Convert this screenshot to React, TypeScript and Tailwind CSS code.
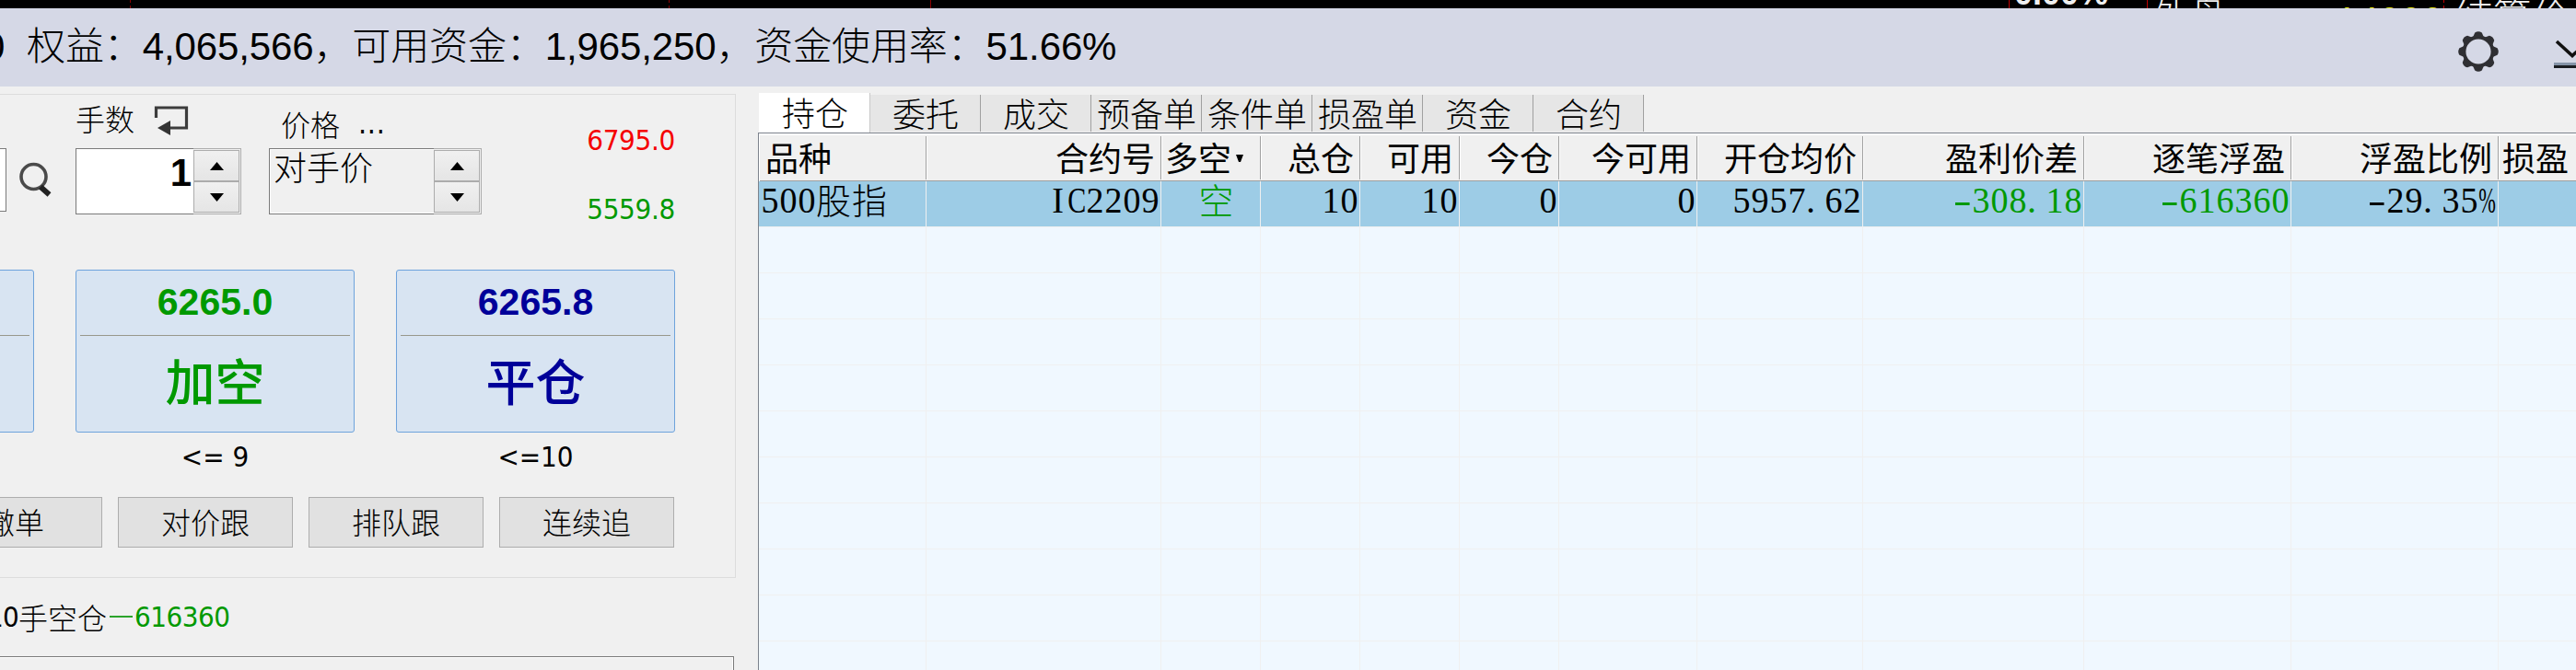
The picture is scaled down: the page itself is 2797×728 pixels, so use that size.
import React from "react";

const SONG = "font-['Liberation_Sans','Noto_Sans_CJK_SC',sans-serif] font-light";
const CJK = "font-['Noto_Sans_CJK_SC',sans-serif]";
const TAHOMA = "font-['DejaVu_Sans_Condensed','DejaVu_Sans','Noto_Sans_CJK_SC',sans-serif] [font-stretch:75%]";

function TickerStrip() {
  return (
    <div className="flex h-[9px] shrink-0 overflow-hidden bg-black">
      <div className="ml-[141px] h-[9px] w-0 border-l border-dashed border-[#8b0000]" />
      <div className="ml-[584px] h-[9px] w-0 border-l border-dashed border-[#8b0000]" />
      <div className="ml-[283px] h-[9px] w-px bg-[#8b0000]" />
      <div className="ml-[1170px] h-[9px] w-px bg-[#c00000]" />
      <div className="ml-[5px] -mt-[31px] w-[144px] shrink-0 whitespace-nowrap font-['Liberation_Sans',sans-serif] text-[36px] leading-[48px] font-bold text-[#f0f0f0]">
        0.00%
      </div>
      <div className="h-[9px] w-px bg-[#c00000]" />
      <div className={`${CJK} ml-[5px] -mt-[8px] w-[199px] shrink-0 whitespace-nowrap text-[40px] leading-[44px] font-light text-[#f0f0f0]`}>
        外盘
      </div>
      <div className="-mt-[3px] w-[117px] shrink-0 whitespace-nowrap font-['Liberation_Sans',sans-serif] text-[42px] leading-[52px] text-[#e8e800]">
        14000
      </div>
      <div className="h-[9px] w-0 border-l border-dashed border-[#c00000]" />
      <div className={`${CJK} ml-[11px] -mt-[7px] shrink-0 whitespace-nowrap text-[42px] leading-[44px] font-light text-[#f0f0f0]`}>
        结算价
      </div>
    </div>
  );
}

function GearIcon() {
  const teeth = [0, 45, 90, 135, 180, 225, 270, 315];
  return (
    <svg className="h-[44px] w-[44px] shrink-0" viewBox="-22 -22 44 44">
      <circle r="15.5" fill="none" stroke="#2f2f33" strokeWidth="3.8" />
      {teeth.map((a) => (
        <path key={a} d="M-6 -15.5 L-3.800 -20.6 Q0 -23 3.800 -20.6 L6 -15.5 Z" fill="#2f2f33" transform={`rotate(${a})`} />
      ))}
    </svg>
  );
}

function AccountBar() {
  return (
    <div className="flex h-[85px] shrink-0 items-start overflow-hidden bg-[#d5d8e6]">
      <div className={`${SONG} -ml-[18px] flex pt-[18px] text-[42px] leading-[48px] tracking-[-0.12px] whitespace-pre text-black`}>
        <span className="w-[47px]">0</span>
        <span>权益：4,065,566，可用资金：1,965,250，资金使用率：51.66%</span>
      </div>
      <div className="ml-auto flex w-[128px] shrink-0 items-start pt-[25px]">
        <GearIcon />
        <svg className="mt-[7px] ml-[59px] h-[44px] w-[25px] shrink-0" viewBox="0 0 25 44">
          <path d="M4 4 L21 19.5 L38 4" fill="none" stroke="#111" strokeWidth="3.6" />
          <rect x="1" y="27" width="30" height="3" fill="#8594a8" />
          <rect x="1" y="30" width="30" height="3" fill="#1a1d22" />
        </svg>
      </div>
    </div>
  );
}

function Spinner() {
  return (
    <div className="flex w-[52px] shrink-0 flex-col border border-l-0 border-[#adadad] bg-[#f0f0f0] p-px pl-0">
      <div className="flex flex-1 items-center justify-center border border-[#acacac] bg-gradient-to-b from-[#f0f0f0] to-[#e5e5e5]">
        <svg className="h-[9px] w-[15px]" viewBox="0 0 15 9"><path d="M7.5 0 L15 9 H0 Z" /></svg>
      </div>
      <div className="flex flex-1 items-center justify-center border border-[#acacac] bg-gradient-to-b from-[#f0f0f0] to-[#e5e5e5]">
        <svg className="h-[9px] w-[15px]" viewBox="0 0 15 9"><path d="M0 0 H15 L7.5 9 Z" /></svg>
      </div>
    </div>
  );
}

function TradeButton({ price, label, tone }: { price: string; label: string; tone: string }) {
  return (
    <div className={`flex h-[177px] w-[303px] shrink-0 flex-col rounded-[3px] border border-[#6ea3dc] bg-[#d8e4f2] px-1 ${tone}`}>
      <div className="h-[71px] border-b border-[#98988c] pt-[10px] text-center font-['Liberation_Sans',sans-serif] text-[41px] leading-[48px] font-bold">
        {price}
      </div>
      <div className={`${CJK} pt-[13px] text-center text-[54px] leading-[70px] font-medium`}>{label}</div>
    </div>
  );
}

function SmallButton({ label }: { label: string }) {
  return (
    <div className={`${CJK} h-[55px] w-[190px] shrink-0 border border-[#adadad] bg-[#e1e1e1] text-center text-[32px] leading-[50px] font-light text-black`}>
      {label}
    </div>
  );
}

function OrderPanel() {
  return (
    <div className="flex w-[823px] shrink-0 flex-col overflow-hidden bg-[#f0f0f0] pt-[8px]">
      <div className="flex h-[526px] w-[799px] shrink-0 flex-col border-t border-r border-[#dcdcdc]">
        <div className="flex h-[130px]">
          <div className="mt-[58px] h-[69px] w-[7px] shrink-0 border border-l-0 border-[#7a7a7a] bg-white" />
          <svg className="mt-[73px] ml-[13px] h-[40px] w-[38px] shrink-0" viewBox="0 0 38 40">
            <circle cx="16.500" cy="16" r="13.500" fill="none" stroke="#4a4a4a" strokeWidth="3.6" />
            <path d="M24 27 L33.500 35.500" stroke="#222" strokeWidth="5.800" />
          </svg>
          <div className="ml-[24px] w-[180px] shrink-0">
            <div className="flex h-[58px] items-start">
              <span className={`${CJK} pt-[5px] text-[32px] leading-[40px] font-light text-black`}>手数</span>
              <svg className="mt-[11px] ml-[20px] h-[34px] w-[40px]" viewBox="0 0 40 34">
                <path d="M3.500 14 V3 H36.500 V25 H18" fill="none" stroke="#3c3c3c" strokeWidth="3.200" />
                <path d="M5 25 L19 17 V33 Z" fill="#333" />
              </svg>
            </div>
            <div className="flex h-[72px] w-[180px]">
              <div className="flex-1 border border-r-0 border-[#7a7a7a] bg-white pt-[2px] pr-[2px] text-right font-['Liberation_Sans',sans-serif] text-[42px] leading-[48px] font-bold">
                1
              </div>
              <Spinner />
            </div>
          </div>
          <div className="ml-[30px] w-[231px] shrink-0">
            <div className={`${CJK} flex h-[58px] gap-[20px] pt-[11px] pl-[13px] text-[32px] leading-[40px] font-light`}>
              <span>价格</span>
              <span className={`${TAHOMA} font-normal tracking-[0.7px]`}>...</span>
            </div>
            <div className="flex h-[72px]">
              <div className={`${CJK} flex-1 border border-r-0 border-[#7a7a7a] pl-[4px] text-[36px] leading-[37px] font-light shadow-[inset_1px_1px_0_#fff,inset_0_-1px_0_#fff]`}>
                对手价
              </div>
              <Spinner />
            </div>
          </div>
          <div className={`${TAHOMA} ml-[80px] flex w-[131px] shrink-0 flex-col gap-[33px] pt-[28px] text-right text-[31px] leading-[42px] tracking-[-0.3px]`}>
            <span className="pr-[1px] text-[#f50000]">6795.0</span>
            <span className="pr-[1px] text-[#009900]">5559.8</span>
          </div>
        </div>
        <div className="mt-[60px] -ml-[266px] flex gap-[45px]">
          <TradeButton price="" label="" tone="text-[#c00000]" />
          <TradeButton price="6265.0" label="加空" tone="text-[#009900]" />
          <TradeButton price="6265.8" label="平仓" tone="text-[#000099]" />
        </div>
        <div className={`${TAHOMA} ml-[82px] flex h-[70px] gap-[45px] pt-[5px] text-center text-[31px] leading-[42px] text-black`}>
          <span className="w-[303px]">&lt;= 9</span>
          <span className="w-[303px]">&lt;=10</span>
        </div>
        <div className="-ml-[79px] flex gap-[17px]">
          <SmallButton label="撤单" />
          <SmallButton label="对价跟" />
          <SmallButton label="排队跟" />
          <SmallButton label="连续追" />
        </div>
        <div className="w-full flex-1 border-b border-[#dcdcdc]" />
      </div>
      <div className={`${TAHOMA} mt-[21px] flex h-[64px] shrink-0 text-[31px] leading-[42px] text-black`}>
        <span className="-ml-[16px] w-[36px] shrink-0 text-right tracking-[-0.8px]">10</span>
        <span className={`${CJK} w-[96px] text-[32px] font-light`}>手空仓</span>
        <svg className="mt-[20px] mr-[2px] ml-[3px] h-[3px] w-[25px]" viewBox="0 0 25 3"><rect width="25" height="2" fill="#2ba32b" /></svg>
        <span className="tracking-[-0.5px] text-[#009900]">616360</span>
      </div>
      <div className="h-[30px] w-[797px] shrink-0 border-t border-r border-[#7a7a7a] shadow-[inset_-1px_1px_0_#fff]" />
    </div>
  );
}

const TABS = ["持仓", "委托", "成交", "预备单", "条件单", "损盈单", "资金", "合约"];

type Column = { title: string; value: string; head: string; cell: string; tone?: string };

const COLUMNS: Column[] = [
  { title: "品种", value: "500股指", head: "w-[181px] pl-[6px]", cell: "w-[182px] pl-[2px]" },
  { title: "合约号", value: "IC2209", head: "w-[255px] justify-end", cell: "w-[255px] justify-end" },
  { title: "多空", value: "空", head: "w-[108px] pl-[4px]", cell: "w-[108px] justify-center pl-[14px]", tone: "text-[#009900]" },
  { title: "总仓", value: "10", head: "w-[108px] justify-end", cell: "w-[108px] justify-end" },
  { title: "可用", value: "10", head: "w-[108px] justify-end", cell: "w-[108px] justify-end" },
  { title: "今仓", value: "0", head: "w-[108px] justify-end", cell: "w-[108px] justify-end" },
  { title: "今可用", value: "0", head: "w-[150px] justify-end", cell: "w-[150px] justify-end" },
  { title: "开仓均价", value: "5957.62", head: "w-[180px] justify-end", cell: "w-[180px] justify-end" },
  { title: "盈利价差", value: "-308.18", head: "w-[240px] justify-end", cell: "w-[240px] justify-end", tone: "text-[#009900]" },
  { title: "逐笔浮盈", value: "-616360", head: "w-[225px] justify-end", cell: "w-[225px] justify-end", tone: "text-[#009900]" },
  { title: "浮盈比例", value: "-29.35%", head: "w-[225px] justify-end", cell: "w-[225px] justify-end" },
  { title: "损盈", value: "", head: "w-[108px] pl-[4px]", cell: "w-[108px]" },
];

function MonoText({ text }: { text: string }) {
  return (
    <>
      {Array.from(text).map((ch, i) => {
        const wide = ch > "\u2fff";
        if (wide) {
          return <span key={i} className={`${CJK} w-[39px] shrink-0 text-[38px] leading-[38px] font-light`}>{ch}</span>;
        }
        if (ch === ".") {
          return <span key={i} className="w-[20px] shrink-0">{ch}</span>;
        }
        const squeeze = ch === "%" ? "scale-x-[0.56]" : ch === "C" ? "scale-x-[0.75]" : ch === "-" ? "scale-x-[1.5]" : "scale-x-[0.95]";
        return (
          <span key={i} className="flex w-[20px] shrink-0 justify-center">
            <span className={squeeze}>{ch}</span>
          </span>
        );
      })}
    </>
  );
}

function PositionsPanel() {
  return (
    <div className="flex min-w-0 flex-1 flex-col overflow-hidden">
      <div className={`${CJK} flex h-[50px] shrink-0 items-end pl-px pt-[7px] text-[36px] font-light text-black`}>
        {TABS.map((tab, i) => (
          <div
            key={tab}
            className={
              i === 0
                ? "h-[43px] w-[121px] border-r border-[#c8c8c8] bg-white pl-[2px] text-center leading-[40px]"
                : "mb-px h-[40px] w-[120px] border-r border-[#a0a0a0] bg-[#e6e6e6] pl-px text-center leading-[38px]"
            }
          >
            {tab}
          </div>
        ))}
      </div>
      <div className="flex flex-1 flex-col overflow-hidden border-t border-l border-[#7c828c] bg-white">
        <div className={`${CJK} ml-px flex h-[52px] shrink-0 border-b border-[#a0a0a0] bg-[#f0f0f0] text-[36px] leading-[44px] text-black shadow-[inset_0_2px_0_#fff]`}>
          {COLUMNS.map((col) => (
            <div key={col.title} className={`mt-[3px] flex h-[47px] shrink-0 border-r border-[#a0a0a0] pr-[6px] shadow-[1px_0_0_#fff] ${col.head}`}>
              {col.title}
              {col.title === "多空" && (
                <svg className="mt-[20px] ml-[5px] h-[8px] w-[8px]" viewBox="0 0 8 8"><path d="M0 0 H8 L5 8 H3 Z" /></svg>
              )}
            </div>
          ))}
        </div>
        {Array.from({ length: 11 }, (_, row) => (
          <div key={row} className={`flex h-[50px] shrink-0 border-b border-[#f0f0f0] ${row === 0 ? "bg-[#9dcce6]" : "bg-[#f0f8ff]"}`}>
            {COLUMNS.map((col) => (
              <div
                key={col.title}
                className={`flex shrink-0 border-r border-[#f0f0f0] pr-[1px] font-['Liberation_Serif','Noto_Sans_CJK_SC',serif] text-[40px] leading-[41px] whitespace-pre ${col.cell} ${col.tone ?? "text-black"}`}
              >
                {row === 0 && <MonoText text={col.value} />}
              </div>
            ))}
          </div>
        ))}
      </div>
    </div>
  );
}

export default function App() {
  return (
    <div className="flex h-[728px] w-[2797px] flex-col overflow-hidden bg-[#f0f0f0]">
      <TickerStrip />
      <AccountBar />
      <div className="flex h-[634px] shrink-0">
        <OrderPanel />
        <PositionsPanel />
      </div>
    </div>
  );
}
